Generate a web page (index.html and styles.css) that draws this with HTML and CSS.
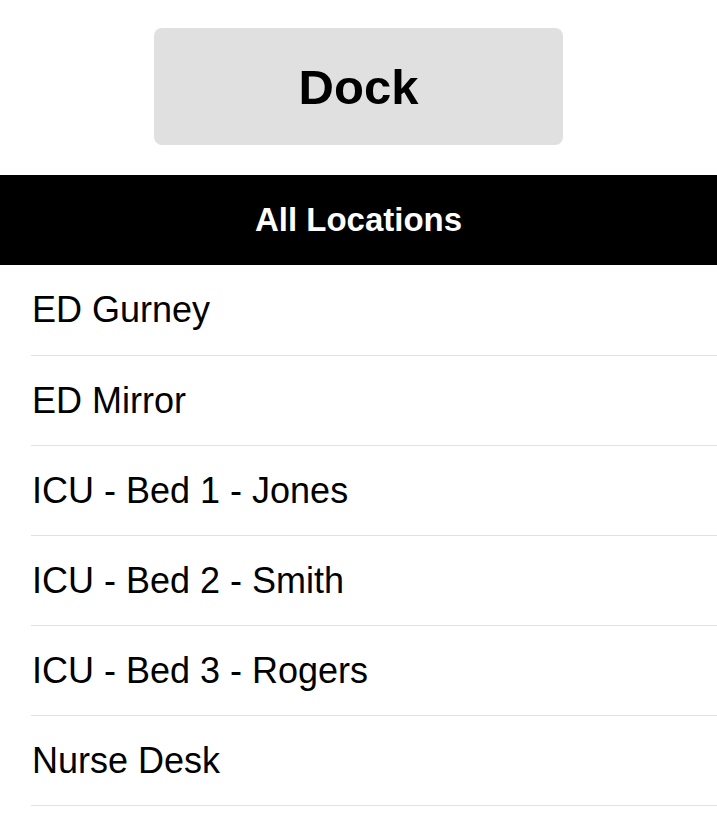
FILE: index.html
```html
<!DOCTYPE html>
<html>
<head>
<meta charset="utf-8">
<link rel="stylesheet" href="styles.css">
</head>
<body>
<div class="top">
  <button class="dock">Dock</button>
</div>
<div class="header">All Locations</div>
<ul class="list">
  <li class="row">ED Gurney</li>
  <li class="row">ED Mirror</li>
  <li class="row">ICU - Bed 1 - Jones</li>
  <li class="row">ICU - Bed 2 - Smith</li>
  <li class="row">ICU - Bed 3 - Rogers</li>
  <li class="row">Nurse Desk</li>
</ul>
</body>
</html>
```
FILE: styles.css
```css
html, body {
  margin: 0;
  padding: 0;
  background: #ffffff;
  font-family: "Liberation Sans", Arial, Helvetica, sans-serif;
  color: #000;
}
.top {
  display: flex;
  justify-content: center;
  padding: 28px 0 30px;
}
.dock {
  width: 409px;
  height: 117px;
  border: none;
  border-radius: 8px;
  background: #e0e0e0;
  font-family: "Liberation Sans", Arial, sans-serif;
  font-weight: bold;
  font-size: 49px;
  color: #000;
  padding: 0;
}
.header {
  height: 90px;
  background: #000;
  color: #fff;
  display: flex;
  align-items: center;
  justify-content: center;
  font-weight: bold;
  font-size: 33px;
}
.list {
  list-style: none;
  margin: 0;
  padding: 0 0 0 31px;
}
.row {
  height: 89px;
  display: flex;
  align-items: center;
  border-bottom: 1px solid #e0e0e6;
  font-size: 36px;
  padding-left: 1px;
}
.row:first-child {
  height: 90px;
}
```
